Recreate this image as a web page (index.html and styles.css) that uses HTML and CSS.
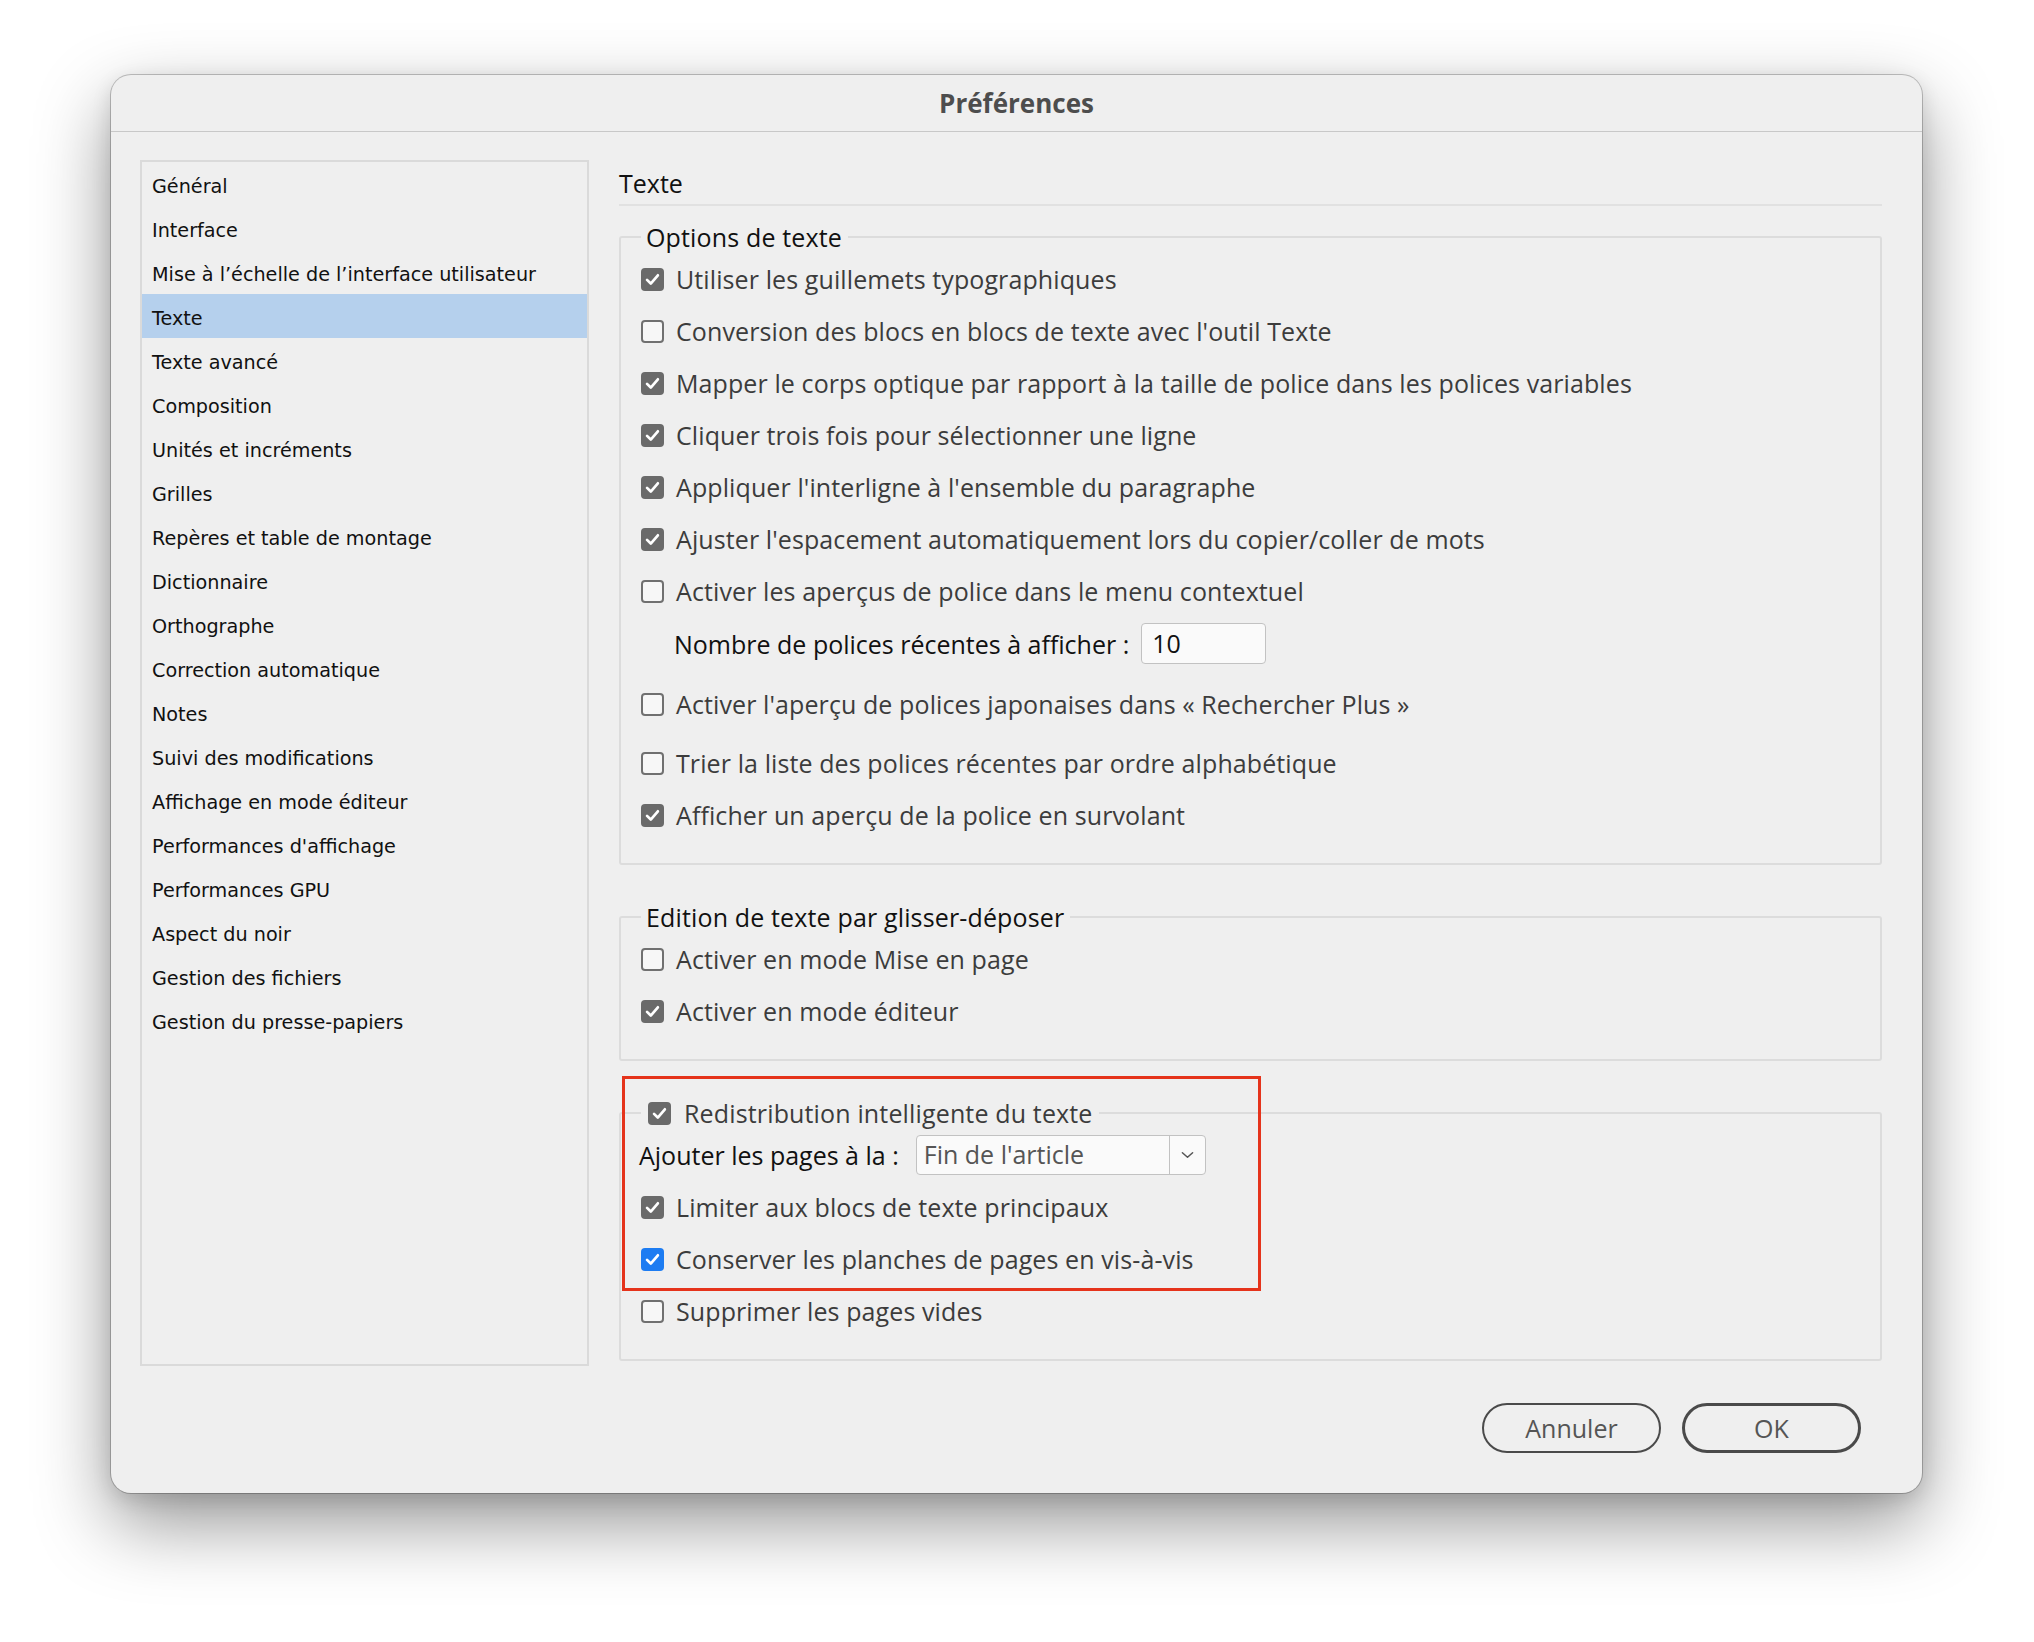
FILE: index.html
```html
<!DOCTYPE html>
<html lang="fr">
<head>
<meta charset="utf-8">
<title>Préférences</title>
<link rel="stylesheet" href="styles.css">
</head>
<body>
<div class="window">
  <div class="titlebar"><span class="title">Préférences</span></div>
  <div class="main">
    <ul class="sidebar">
      <li>Général</li>
      <li>Interface</li>
      <li>Mise à l’échelle de l’interface utilisateur</li>
      <li class="active">Texte</li>
      <li>Texte avancé</li>
      <li>Composition</li>
      <li>Unités et incréments</li>
      <li>Grilles</li>
      <li>Repères et table de montage</li>
      <li>Dictionnaire</li>
      <li>Orthographe</li>
      <li>Correction automatique</li>
      <li>Notes</li>
      <li>Suivi des modifications</li>
      <li>Affichage en mode éditeur</li>
      <li>Performances d'affichage</li>
      <li>Performances GPU</li>
      <li>Aspect du noir</li>
      <li>Gestion des fichiers</li>
      <li>Gestion du presse-papiers</li>
    </ul>
    <div class="pane">
      <div class="heading">Texte</div>

      <fieldset class="group">
        <legend class="legend">Options de texte</legend>
        <div class="rows">
          <div class="opt"><span class="cb on"><svg viewBox="0 0 24 24"><path d="M6.3 12.4 L10.2 16.2 L17.6 7.6"/></svg></span><span>Utiliser les guillemets typographiques</span></div>
          <div class="opt"><span class="cb"></span><span>Conversion des blocs en blocs de texte avec l'outil Texte</span></div>
          <div class="opt"><span class="cb on"><svg viewBox="0 0 24 24"><path d="M6.3 12.4 L10.2 16.2 L17.6 7.6"/></svg></span><span>Mapper le corps optique par rapport à la taille de police dans les polices variables</span></div>
          <div class="opt"><span class="cb on"><svg viewBox="0 0 24 24"><path d="M6.3 12.4 L10.2 16.2 L17.6 7.6"/></svg></span><span>Cliquer trois fois pour sélectionner une ligne</span></div>
          <div class="opt"><span class="cb on"><svg viewBox="0 0 24 24"><path d="M6.3 12.4 L10.2 16.2 L17.6 7.6"/></svg></span><span>Appliquer l'interligne à l'ensemble du paragraphe</span></div>
          <div class="opt"><span class="cb on"><svg viewBox="0 0 24 24"><path d="M6.3 12.4 L10.2 16.2 L17.6 7.6"/></svg></span><span>Ajuster l'espacement automatiquement lors du copier/coller de mots</span></div>
          <div class="opt"><span class="cb"></span><span>Activer les aperçus de police dans le menu contextuel</span></div>
          <div class="field-row"><span class="field-label">Nombre de polices récentes à afficher :</span><span class="input">10</span></div>
          <div class="opt gap-a"><span class="cb"></span><span>Activer l'aperçu de polices japonaises dans « Rechercher Plus »</span></div>
          <div class="opt gap-b"><span class="cb"></span><span>Trier la liste des polices récentes par ordre alphabétique</span></div>
          <div class="opt"><span class="cb on"><svg viewBox="0 0 24 24"><path d="M6.3 12.4 L10.2 16.2 L17.6 7.6"/></svg></span><span>Afficher un aperçu de la police en survolant</span></div>
        </div>
      </fieldset>

      <fieldset class="group group-spaced">
        <legend class="legend">Edition de texte par glisser-déposer</legend>
        <div class="rows">
          <div class="opt"><span class="cb"></span><span>Activer en mode Mise en page</span></div>
          <div class="opt"><span class="cb on"><svg viewBox="0 0 24 24"><path d="M6.3 12.4 L10.2 16.2 L17.6 7.6"/></svg></span><span>Activer en mode éditeur</span></div>
        </div>
      </fieldset>

      <div class="group-wrap">
        <fieldset class="group">
          <legend class="legend legend-cb"><span class="cb on"><svg viewBox="0 0 24 24"><path d="M6.3 12.4 L10.2 16.2 L17.6 7.6"/></svg></span><span class="legend-label">Redistribution intelligente du texte</span></legend>
          <div class="rows">
            <div class="field-row flush"><span class="field-label">Ajouter les pages à la :</span>
              <span class="select"><span class="select-value">Fin de l'article</span><span class="select-arrow"><svg viewBox="0 0 14 8"><path d="M1.5 1.5 L7 6.5 L12.5 1.5"/></svg></span></span>
            </div>
            <div class="opt"><span class="cb on"><svg viewBox="0 0 24 24"><path d="M6.3 12.4 L10.2 16.2 L17.6 7.6"/></svg></span><span>Limiter aux blocs de texte principaux</span></div>
            <div class="opt"><span class="cb on blue"><svg viewBox="0 0 24 24"><path d="M6.3 12.4 L10.2 16.2 L17.6 7.6"/></svg></span><span>Conserver les planches de pages en vis-à-vis</span></div>
            <div class="opt"><span class="cb"></span><span>Supprimer les pages vides</span></div>
          </div>
        </fieldset>
        <div class="highlight"></div>
      </div>
    </div>
  </div>
  <div class="footer">
    <button class="btn">Annuler</button>
    <button class="btn btn-default">OK</button>
  </div>
</div>
</body>
</html>
```
FILE: styles.css
```css
* { box-sizing: border-box; }

html, body {
  margin: 0;
  padding: 0;
  background: #ffffff;
}

body {
  width: 2034px;
  height: 1642px;
  overflow: hidden;
  font-family: "Open Sans", "Noto Sans", sans-serif;
}

.window {
  margin: 75px 0 0 111px;
  width: 1811px;
  height: 1418px;
  background: #efefef;
  border-radius: 20px;
  box-shadow: 0 0 0 1px rgba(0, 0, 0, 0.22), 0 30px 75px rgba(0, 0, 0, 0.42), 0 6px 20px rgba(0, 0, 0, 0.12);
  display: flex;
  flex-direction: column;
}

.titlebar {
  height: 57px;
  border-bottom: 1px solid #c8c8c8;
  display: flex;
  align-items: center;
  justify-content: center;
}

.title {
  font-family: "Open Sans", sans-serif;
  font-weight: 700;
  font-size: 26px;
  color: #4d4d4d;
}

.main {
  display: flex;
  gap: 30px;
  padding: 28px 40px 0 29px;
  height: 1234px;
}

.sidebar {
  list-style: none;
  margin: 0;
  padding: 0;
  width: 449px;
  height: 1206px;
  border: 2px solid #dadada;
  font-family: "DejaVu Sans", sans-serif;
  font-size: 19.2px;
  color: #111;
}

.sidebar li {
  height: 44px;
  line-height: 44px;
  padding: 3px 0 0 10px;
  white-space: nowrap;
}

.sidebar li.active {
  background: #b5d0ed;
}

.pane {
  width: 1263px;
}

.heading {
  margin-top: 2px;
  height: 44px;
  line-height: 42px;
  border-bottom: 2px solid #e1e1e1;
  font-size: 25px;
  color: #111;
}

.group {
  margin: 13px 0 0;
  padding: 4px 20px 28px 20px;
  border: 2px solid #dcdcdc;
  border-radius: 3px;
  min-width: 0;
}

.group-spaced {
  margin-top: 34px;
}

.legend {
  padding: 0 6px 0 5px;
  line-height: 36px;
  font-size: 25px;
  letter-spacing: 0.15px;
  color: #111;
}

.legend-cb {
  display: flex;
  align-items: center;
  gap: 13px;
  padding-left: 7px;
  height: 36px;
}

.legend-label {
  color: #3c3c3c;
}

.rows {
  display: flex;
  flex-direction: column;
  gap: 12px;
}

.opt {
  display: flex;
  align-items: center;
  gap: 12px;
  height: 40px;
  font-size: 25px;
  letter-spacing: 0.1px;
  color: #3c3c3c;
  white-space: nowrap;
}

.gap-a { margin-top: 8px; }
.gap-b { margin-top: 7px; }

.cb {
  flex: none;
  width: 23px;
  height: 23px;
  border-radius: 4px;
  border: 2px solid #707070;
  background: #f7f7f7;
  display: flex;
  align-items: center;
  justify-content: center;
}

.cb.on {
  border: none;
  background: #6a6a6a;
}

.cb.blue {
  background: #1d7cf2;
}

.cb svg {
  width: 23px;
  height: 23px;
}

.cb svg path {
  fill: none;
  stroke: #ffffff;
  stroke-width: 2.8;
  stroke-linecap: round;
  stroke-linejoin: round;
}

.field-row {
  display: flex;
  align-items: center;
  gap: 12px;
  height: 41px;
  padding-left: 33px;
  font-size: 25px;
  color: #111;
  white-space: nowrap;
}

.field-row.flush {
  padding-left: 0;
  margin-left: -2px;
  height: 40px;
  gap: 17px;
}

.input {
  width: 125px;
  height: 41px;
  border: 1.5px solid #c2c2c2;
  border-radius: 4px;
  background: #fafafa;
  padding-left: 10px;
  line-height: 38px;
  color: #111;
}

.select {
  display: flex;
  width: 290px;
  height: 40px;
  border: 1.5px solid #c2c2c2;
  border-radius: 4px;
  background: #fafafa;
}

.select-value {
  flex: 1;
  padding-left: 7px;
  line-height: 37px;
  color: #555;
  border-right: 1.5px solid #c2c2c2;
}

.select-arrow {
  width: 35px;
  display: flex;
  align-items: center;
  justify-content: center;
}

.select-arrow svg {
  width: 13px;
  height: 8px;
}

.select-arrow path {
  fill: none;
  stroke: #555;
  stroke-width: 1.6;
  stroke-linecap: round;
  stroke-linejoin: round;
}

.group-wrap {
  position: relative;
  margin-top: 34px;
}

.group-wrap .group {
  margin-top: 0;
}

.highlight {
  position: absolute;
  left: 3px;
  top: -19px;
  width: 639px;
  height: 215px;
  border: 3px solid #e5331b;
  pointer-events: none;
}

.footer {
  display: flex;
  justify-content: flex-end;
  gap: 21px;
  padding: 37px 61px 0 0;
}

.btn {
  width: 179px;
  height: 50px;
  border-radius: 25px;
  border: 2px solid #4a4a4a;
  background: transparent;
  font-family: "Open Sans", sans-serif;
  font-size: 25px;
  color: #555;
  padding: 0;
}

.btn-default {
  border-width: 3.5px;
}
```
